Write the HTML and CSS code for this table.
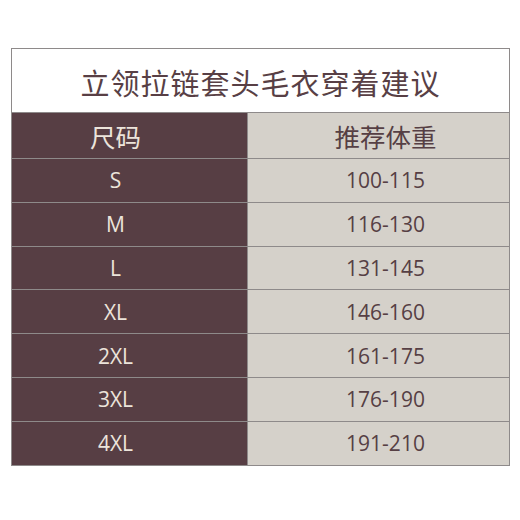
FILE: index.html
```html
<!DOCTYPE html>
<html lang="zh">
<head>
<meta charset="utf-8">
<link rel="stylesheet" href="styles.css">
</head>
<body>
<div class="wrap">
<table class="size-table">
  <colgroup>
    <col class="col-size">
    <col class="col-weight">
  </colgroup>
  <thead>
    <tr><th class="title" colspan="2">立领拉链套头毛衣穿着建议</th></tr>
    <tr class="head"><th class="c-size">尺码</th><th class="c-weight">推荐体重</th></tr>
  </thead>
  <tbody>
    <tr><td class="c-size">S</td><td class="c-weight">100-115</td></tr>
    <tr><td class="c-size">M</td><td class="c-weight">116-130</td></tr>
    <tr><td class="c-size">L</td><td class="c-weight">131-145</td></tr>
    <tr><td class="c-size">XL</td><td class="c-weight">146-160</td></tr>
    <tr><td class="c-size">2XL</td><td class="c-weight">161-175</td></tr>
    <tr><td class="c-size">3XL</td><td class="c-weight">176-190</td></tr>
    <tr><td class="c-size">4XL</td><td class="c-weight">191-210</td></tr>
  </tbody>
</table>
</div>
</body>
</html>
```

FILE: styles.css
```css
html, body {
  margin: 0;
  padding: 0;
  background: #ffffff;
}
.wrap {
  padding: 48px 0 0 11px;
}
.size-table {
  border-collapse: collapse;
  width: 499px;
  table-layout: fixed;
  font-family: "Open Sans", "Noto Sans CJK SC", sans-serif;
}
.col-size {
  width: 236px;
}
.size-table th,
.size-table td {
  border: 1px solid #8e8a8a;
  padding: 0;
  text-align: center;
  font-weight: normal;
}
.title {
  height: 61px;
  background: #ffffff;
  color: #583f45;
  font-size: 29px;
  letter-spacing: 1px;
  padding-top: 2px !important;
}
.head th {
  height: 45px;
  font-size: 25.5px;
}
.size-table .c-size {
  background: #573e44;
  color: #ece4db;
  padding-right: 28px;
}
.size-table .c-weight {
  background: #d5d1ca;
  color: #563f44;
  padding-left: 14px;
}
tbody td {
  height: 42.8px;
  font-size: 21px;
}
```
